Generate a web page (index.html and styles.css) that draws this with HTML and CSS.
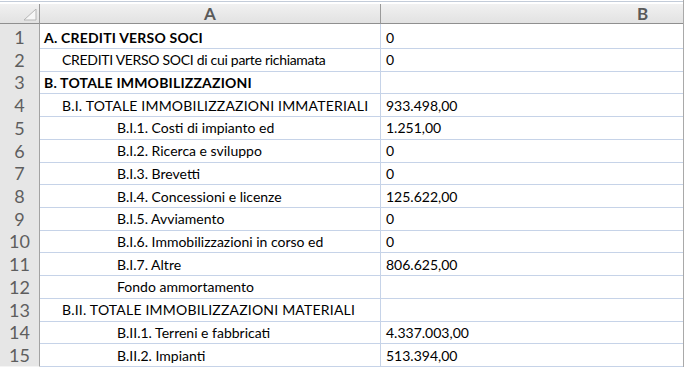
FILE: index.html
```html
<!DOCTYPE html>
<html lang="it">
<head>
<meta charset="utf-8">
<title>Foglio</title>
<link rel="stylesheet" href="styles.css">
</head>
<body>
<div class="sheet">
  <div class="row head">
    <div class="corner"><svg class="tri" width="13" height="12" viewBox="0 0 13 12"><polygon points="12,0 12,11 0,11" fill="#f7f7f7" stroke="#b5b5b5" stroke-width="1"/></svg></div>
    <div class="colh">A</div>
    <div class="colh">B</div>
  </div>
  <div class="row"><div class="num">1</div><div class="cell b caps">A. CREDITI VERSO SOCI</div><div class="cell v">0</div></div>
  <div class="row"><div class="num">2</div><div class="cell i1 tight">CREDITI VERSO SOCI di cui parte richiamata</div><div class="cell v">0</div></div>
  <div class="row"><div class="num">3</div><div class="cell b caps">B. TOTALE IMMOBILIZZAZIONI</div><div class="cell v"></div></div>
  <div class="row"><div class="num">4</div><div class="cell i1 caps">B.I. TOTALE IMMOBILIZZAZIONI IMMATERIALI</div><div class="cell v">933.498,00</div></div>
  <div class="row"><div class="num">5</div><div class="cell i2">B.I.1. Costi di impianto ed</div><div class="cell v">1.251,00</div></div>
  <div class="row"><div class="num">6</div><div class="cell i2">B.I.2. Ricerca e sviluppo</div><div class="cell v">0</div></div>
  <div class="row"><div class="num">7</div><div class="cell i2">B.I.3. Brevetti</div><div class="cell v">0</div></div>
  <div class="row"><div class="num">8</div><div class="cell i2">B.I.4. Concessioni e licenze</div><div class="cell v">125.622,00</div></div>
  <div class="row"><div class="num">9</div><div class="cell i2">B.I.5. Avviamento</div><div class="cell v">0</div></div>
  <div class="row"><div class="num">10</div><div class="cell i2">B.I.6. Immobilizzazioni in corso ed</div><div class="cell v">0</div></div>
  <div class="row"><div class="num">11</div><div class="cell i2">B.I.7. Altre</div><div class="cell v">806.625,00</div></div>
  <div class="row"><div class="num">12</div><div class="cell i2">Fondo ammortamento</div><div class="cell v"></div></div>
  <div class="row"><div class="num">13</div><div class="cell i1 caps">B.II. TOTALE IMMOBILIZZAZIONI MATERIALI</div><div class="cell v"></div></div>
  <div class="row"><div class="num">14</div><div class="cell i2">B.II.1. Terreni e fabbricati</div><div class="cell v">4.337.003,00</div></div>
  <div class="row"><div class="num">15</div><div class="cell i2">B.II.2. Impianti</div><div class="cell v">513.394,00</div></div>
</div>
</body>
</html>
```
FILE: styles.css
```css
html, body {
  margin: 0;
  padding: 0;
  background: #ffffff;
}
.sheet {
  width: 684px;
  height: 367px;
  box-sizing: border-box;
  overflow: hidden;
  padding-top: 1px;
  border-right: 1px solid #a9a9a9;
  font-family: "Lato", "Liberation Sans", sans-serif;
  font-size: 14px;
  color: #000;
}
.row {
  display: grid;
  grid-template-columns: 40px 341px 524px;
  height: 22.73px;
  box-sizing: border-box;
}
.head {
  height: 23px;
  border-top: 1px solid #c3ccd9;
  padding-top: 2px;
  background: #fff;
}
.corner, .colh {
  background: linear-gradient(#f1f1f1, #e2e2e2);
  border-bottom: 1px solid #8f8f8f;
  border-right: 1px solid #9a9a9a;
  box-sizing: border-box;
}
.corner {
  position: relative;
}
.tri {
  position: absolute;
  right: 2px;
  bottom: 2px;
}
.colh {
  display: flex;
  align-items: center;
  justify-content: center;
  font-size: 17px;
  font-weight: bold;
  color: #5a5a5a;
  line-height: 1;
}
.num {
  background: #e6e6e6;
  border-right: 1px solid #a3a3a3;
  border-bottom: 1px solid #f4f4f4;
  box-sizing: border-box;
  display: flex;
  align-items: center;
  justify-content: center;
  font-size: 18px;
  color: #5e5e5e;
  padding-top: 2px;
}
.cell {
  border-bottom: 1px solid #c6d3e8;
  border-right: 1px solid #c6d3e8;
  box-sizing: border-box;
  display: flex;
  align-items: center;
  white-space: nowrap;
  padding-left: 4px;
  padding-top: 2px;
}
.b { font-weight: bold; }
.caps { letter-spacing: 0.2px; }
.tight { letter-spacing: -0.3px; }
.i1 { padding-left: 22px; }
.i2 { padding-left: 77px; }
.v { padding-left: 5px; }
```
